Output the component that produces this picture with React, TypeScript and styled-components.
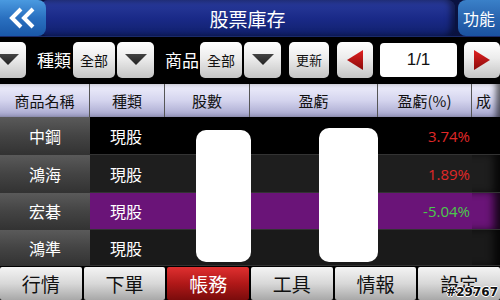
import React from "react";
import styled, { createGlobalStyle } from "styled-components";

const Global = createGlobalStyle`
  html, body { margin: 0; padding: 0; background: #000; }
  body { width: 500px; height: 300px; overflow: hidden; font-family: "Noto Sans CJK TC", "Noto Sans", sans-serif; }
`;

const Screen = styled.div`
  position: relative;
  width: 500px;
  height: 300px;
  display: flex;
  flex-direction: column;
  background: #000;
  overflow: hidden;
`;

const Header = styled.div`
  height: 36px;
  display: flex;
  align-items: stretch;
  background: #0a1240;
`;

const BackBtn = styled.div`
  width: 46px;
  margin-right: -6px;
  z-index: 1;
  border-radius: 0 8px 8px 0;
  background: linear-gradient(#4a9ae0, #2a70c0 50%, #1a58a8);
  display: flex;
  align-items: center;
  justify-content: center;
`;

const TitleBar = styled.div`
  flex: 1;
  border-radius: 8px;
  background: linear-gradient(#2a3c9c, #1a2a88 50%, #10206c);
  color: #fff;
  font-size: 19px;
  display: flex;
  align-items: center;
  justify-content: center;
  box-shadow: inset -4px 0 6px rgba(0,0,0,0.5);
`;

const FuncBtn = styled.div`
  width: 42px;
  margin-left: 3px;
  border-radius: 8px 0 0 8px;
  background: linear-gradient(#3a80c8, #2a66b0 50%, #1a52a0);
  color: #fff;
  font-size: 16px;
  display: flex;
  align-items: center;
  justify-content: center;
`;

const Toolbar = styled.div`
  height: 44px;
  display: flex;
  align-items: center;
  padding-top: 2px;
  box-sizing: border-box;
  border-top: 1px solid #1a2a6a;
`;

const Btn = styled.div<{ $w: number; $ml?: number; $fs?: number }>`
  width: ${(p) => p.$w}px;
  margin-left: ${(p) => p.$ml ?? 0}px;
  height: 36px;
  border-radius: 5px;
  background: linear-gradient(#ffffff, #ececec 45%, #c4c4c4);
  display: flex;
  align-items: center;
  justify-content: center;
  color: #111;
  font-size: ${(p) => p.$fs ?? 13}px;
  flex-shrink: 0;
`;

const Label = styled.div<{ $ml: number }>`
  margin-left: ${(p) => p.$ml}px;
  color: #fff;
  font-size: 17px;
  flex-shrink: 0;
`;

const Drop = styled.div<{ $ml: number }>`
  margin-left: ${(p) => p.$ml}px;
  display: flex;
  gap: 2px;
  flex-shrink: 0;
`;

const PageBox = styled.div`
  width: 78px;
  height: 34px;
  margin-left: 7px;
  border-radius: 4px;
  background: #fff;
  display: flex;
  align-items: center;
  justify-content: center;
  font-size: 17px;
  color: #111;
  font-family: "Liberation Sans", sans-serif;
`;

const Table = styled.div`
  margin-top: 4px;
  display: flex;
  flex-direction: column;
  flex: 1;
  overflow: hidden;
`;

const cols = "90px 75px 85px 128px 94px 28px";

const HeadRow = styled.div`
  height: 38px;
  display: grid;
  grid-template-columns: ${cols};
  background: linear-gradient(#f0f0fc, #d4d4ee 50%, #a4a4cc);
  box-shadow: inset -6px 0 6px -2px rgba(0,0,0,0.6);
`;

const HeadCell = styled.div`
  display: flex;
  align-items: center;
  justify-content: center;
  font-size: 15px;
  color: #111;
  border-right: 1px solid #555;
  white-space: nowrap;
  overflow: hidden;
  &:last-child { border-right: none; justify-content: flex-start; padding-left: 4px; }
`;

const Row = styled.div<{ $bg: string; $h: number }>`
  height: ${(p) => p.$h}px;
  display: grid;
  grid-template-columns: ${cols};
  background: ${(p) => p.$bg};
  border-bottom: 1px solid #333;
  box-sizing: border-box;
  flex-shrink: 0;
`;

const NameCell = styled.div`
  display: flex;
  align-items: center;
  justify-content: center;
  color: #fff;
  font-size: 16px;
  background: linear-gradient(#5a5a5a, #444 50%, #333);
`;

const TypeCell = styled.div`
  display: flex;
  align-items: center;
  padding-left: 20px;
  color: #fff;
  font-size: 16px;
`;

const Empty = styled.div``;

const PctCell = styled.div<{ $c: string }>`
  display: flex;
  align-items: center;
  justify-content: flex-end;
  padding-right: 2px;
  color: ${(p) => p.$c};
  font-size: 15px;
  font-family: "Open Sans", sans-serif;
`;

const EdgeCell = styled.div`
  box-shadow: inset -8px 0 8px -2px rgba(0,0,0,0.8);
`;

const Redact = styled.div<{ $x: number; $y: number; $w: number; $h: number }>`
  position: absolute;
  left: ${(p) => p.$x}px;
  top: ${(p) => p.$y}px;
  width: ${(p) => p.$w}px;
  height: ${(p) => p.$h}px;
  background: #fff;
  border-radius: 10px;
`;

const TabBar = styled.div`
  height: 33px;
  display: grid;
  grid-template-columns: repeat(6, 1fr);
  gap: 2px;
  background: #000;
  padding-top: 1px;
`;

const Tab = styled.div<{ $active?: boolean }>`
  display: flex;
  align-items: center;
  justify-content: center;
  font-size: 19px;
  color: ${(p) => (p.$active ? "#fff" : "#111")};
  background: ${(p) =>
    p.$active
      ? "linear-gradient(#e03030, #b01818 50%, #7a0c0c)"
      : "linear-gradient(#f4f4f4, #d8d8d8 50%, #a8a8a8)"};
  border-radius: 2px;
`;

const Watermark = styled.div`
  position: absolute;
  right: 2px;
  bottom: 1px;
  font-family: "DejaVu Sans", sans-serif;
  font-weight: bold;
  font-size: 12px;
  color: #111;
  text-shadow: 0 0 1px #fff, 1px 0 0 #fff, -1px 0 0 #fff, 0 1px 0 #fff, 0 -1px 0 #fff;
`;

const Tri = ({ dir, color }: { dir: "down" | "left" | "right"; color: string }) => {
  const pts =
    dir === "down" ? "0,0 22,0 11,11" : dir === "left" ? "16,0 16,20 0,10" : "0,0 0,20 16,10";
  const w = dir === "down" ? 22 : 16;
  const h = dir === "down" ? 11 : 20;
  return (
    <svg width={w} height={h} viewBox={`0 0 ${w} ${h}`}>
      <defs>
        <linearGradient id={`g${dir}${color}`} x1="0" y1="0" x2="0" y2="1">
          <stop offset="0" stopColor={color} />
          <stop offset="1" stopColor={color === "#444" ? "#222" : "#8a0a0a"} />
        </linearGradient>
      </defs>
      <polygon points={pts} fill={`url(#g${dir}${color})`} />
    </svg>
  );
};

const DropDown = ({ ml }: { ml: number }) => (
  <Drop $ml={ml}>
    <Btn $w={42} $fs={14}>全部</Btn>
    <Btn $w={37}>
      <Tri dir="down" color="#444" />
    </Btn>
  </Drop>
);

const rows = [
  { name: "中鋼", type: "現股", pct: "3.74%", c: "#e02828", bg: "#000", h: 38 },
  { name: "鴻海", type: "現股", pct: "1.89%", c: "#e02828", bg: "#1e1e1e", h: 38 },
  { name: "宏碁", type: "現股", pct: "-5.04%", c: "#4cc84c", bg: "#6a1478", h: 37 },
  { name: "鴻準", type: "現股", pct: "", c: "#e02828", bg: "#1a1a1a", h: 36 },
];

export default function App() {
  return (
    <Screen>
      <Global />
      <Header>
        <BackBtn>
          <svg width="30" height="22" viewBox="0 0 30 22">
            <polyline points="13,2 4,11 13,20" fill="none" stroke="#fff" strokeWidth="4" />
            <polyline points="25,2 16,11 25,20" fill="none" stroke="#fff" strokeWidth="4" />
          </svg>
        </BackBtn>
        <TitleBar>股票庫存</TitleBar>
        <FuncBtn>功能</FuncBtn>
      </Header>
      <Toolbar>
        <Btn $w={36} $ml={-10}>
          <Tri dir="down" color="#444" />
        </Btn>
        <Label $ml={11}>種類</Label>
        <DropDown ml={2} />
        <Label $ml={11}>商品</Label>
        <DropDown ml={1} />
        <Btn $w={40} $ml={8}>更新</Btn>
        <Btn $w={36} $ml={8}>
          <Tri dir="left" color="#e02020" />
        </Btn>
        <PageBox>1/1</PageBox>
        <Btn $w={36} $ml={7}>
          <Tri dir="right" color="#e02020" />
        </Btn>
      </Toolbar>
      <Table>
        <HeadRow>
          <HeadCell>商品名稱</HeadCell>
          <HeadCell>種類</HeadCell>
          <HeadCell>股數</HeadCell>
          <HeadCell>盈虧</HeadCell>
          <HeadCell>盈虧(%)</HeadCell>
          <HeadCell>成</HeadCell>
        </HeadRow>
        {rows.map((r) => (
          <Row key={r.name} $bg={r.bg} $h={r.h}>
            <NameCell>{r.name}</NameCell>
            <TypeCell>{r.type}</TypeCell>
            <Empty />
            <Empty />
            <PctCell $c={r.c}>{r.pct}</PctCell>
            <EdgeCell />
          </Row>
        ))}
      </Table>
      <TabBar>
        <Tab>行情</Tab>
        <Tab>下單</Tab>
        <Tab $active>帳務</Tab>
        <Tab>工具</Tab>
        <Tab>情報</Tab>
        <Tab>設定</Tab>
      </TabBar>
      <Redact $x={196} $y={130} $w={55} $h={132} />
      <Redact $x={319} $y={128} $w={59} $h={134} />
      <Watermark>#29767</Watermark>
    </Screen>
  );
}
